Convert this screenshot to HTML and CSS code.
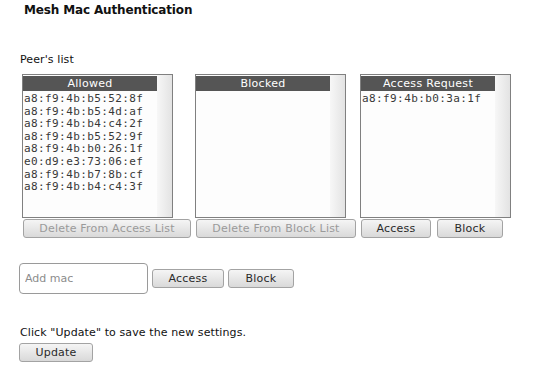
FILE: index.html
```html
<!DOCTYPE html>
<html lang="en">
  <head>
    <meta charset="UTF-8" />
    <title>Mesh Mac Authentication</title>
    <link rel="stylesheet" href="styles.css">
  </head>
  <body>
    <h1 class="title">Mesh Mac Authentication</h1>

    <p class="section-label">Peer's list</p>

    <div class="lists">
      <div class="list-col col-allowed">
        <div class="listbox">
          <div class="listbox-body">
            <div class="listbox-head">Allowed</div>
            <div class="mac">a8:f9:4b:b5:52:8f</div>
            <div class="mac">a8:f9:4b:b5:4d:af</div>
            <div class="mac">a8:f9:4b:b4:c4:2f</div>
            <div class="mac">a8:f9:4b:b5:52:9f</div>
            <div class="mac">a8:f9:4b:b0:26:1f</div>
            <div class="mac">e0:d9:e3:73:06:ef</div>
            <div class="mac">a8:f9:4b:b7:8b:cf</div>
            <div class="mac">a8:f9:4b:b4:c4:3f</div>
          </div>
          <div class="scroll-track"></div>
        </div>
        <div class="list-actions">
          <button class="btn btn-wide-1" disabled>Delete From Access List</button>
        </div>
      </div>

      <div class="list-col col-blocked">
        <div class="listbox">
          <div class="listbox-body">
            <div class="listbox-head">Blocked</div>
          </div>
          <div class="scroll-track"></div>
        </div>
        <div class="list-actions">
          <button class="btn btn-wide-2" disabled>Delete From Block List</button>
        </div>
      </div>

      <div class="list-col col-request">
        <div class="listbox">
          <div class="listbox-body">
            <div class="listbox-head">Access Request</div>
            <div class="mac">a8:f9:4b:b0:3a:1f</div>
          </div>
          <div class="scroll-track"></div>
        </div>
        <div class="list-actions">
          <button class="btn btn-access">Access</button>
          <button class="btn btn-block">Block</button>
        </div>
      </div>
    </div>

    <div class="add-row">
      <input type="text" class="mac-input" placeholder="Add mac" />
      <button class="btn btn-access">Access</button>
      <button class="btn btn-block">Block</button>
    </div>

    <p class="hint">Click "Update" to save the new settings.</p>
    <button class="btn btn-update">Update</button>
  </body>
</html>
```

FILE: styles.css
```css
:root {
  --head-bg: #555555;
  --box-border: #808080;
  --btn-border: #a3a3a3;
  --text: #111111;
}

body {
  font-family: "DejaVu Sans", sans-serif;
  font-size: 11px;
  letter-spacing: 0.1px;
  color: var(--text);
  margin: 0;
  padding: 0 0 0 19px;
  background: #ffffff;
}

.title {
  font-size: 12px;
  font-weight: bold;
  letter-spacing: -0.15px;
  margin: 3px 0 0 5px;
  line-height: 14px;
}

.section-label {
  margin: 36px 0 0 1px;
  line-height: 13px;
}

/* three list boxes */
.lists {
  display: flex;
  gap: 4px;
  margin-top: 8px;
  padding-left: 3px;
}

.list-col {
  display: flex;
  flex-direction: column;
}

.listbox {
  display: flex;
  width: 149px;
  height: 142px;
  border: 1px solid var(--box-border);
  background: #fdfdfd;
}

.listbox-body {
  flex: 1;
  padding-top: 1px;
  overflow: hidden;
}

.listbox-head {
  background: var(--head-bg);
  color: #ffffff;
  font-size: 11px;
  letter-spacing: 0.3px;
  line-height: 15px;
  height: 15px;
  text-align: center;
}

.mac {
  font-family: "DejaVu Sans Mono", monospace;
  font-size: 11px;
  letter-spacing: 0.4px;
  line-height: 12.6px;
  padding-left: 1px;
  color: #383838;
}

.listbox-head + .mac {
  margin-top: 2px;
}

.scroll-track {
  width: 15px;
  background: linear-gradient(to right, #f7f7f7, #e3e3e3);
}

.list-actions {
  display: flex;
  gap: 6px;
  margin-top: 1px;
  padding-left: 1px;
}

.btn {
  font-family: "DejaVu Sans", sans-serif;
  font-size: 11px;
  letter-spacing: 0.2px;
  color: #2a2a2a;
  height: 19px;
  padding: 0 4px;
  border: 1px solid var(--btn-border);
  border-radius: 3px;
  background: linear-gradient(#f5f5f5, #d9d9d9);
  line-height: 17px;
}

.btn:disabled {
  color: #9a9a9a;
}

.btn-wide-1 {
  width: 168px;
}

.btn-wide-2 {
  width: 160px;
}

.btn-access {
  width: 70px;
}

.btn-block {
  width: 66px;
}

/* manual add */
.add-row {
  display: flex;
  align-items: center;
  margin-top: 25px;
}

.mac-input {
  width: 129px;
  height: 31px;
  box-sizing: border-box;
  border: 1px solid #9a9a9a;
  border-radius: 4px;
  padding: 0 5px;
  font-family: "DejaVu Sans", sans-serif;
  font-size: 11px;
  margin-right: 4px;
}

.mac-input::placeholder {
  color: #8c8c8c;
}

.add-row .btn-access {
  width: 72px;
  margin-right: 4px;
}

.hint {
  margin: 32px 0 0 1px;
  line-height: 13px;
}

.btn-update {
  width: 74px;
  margin-top: 4px;
}
```
